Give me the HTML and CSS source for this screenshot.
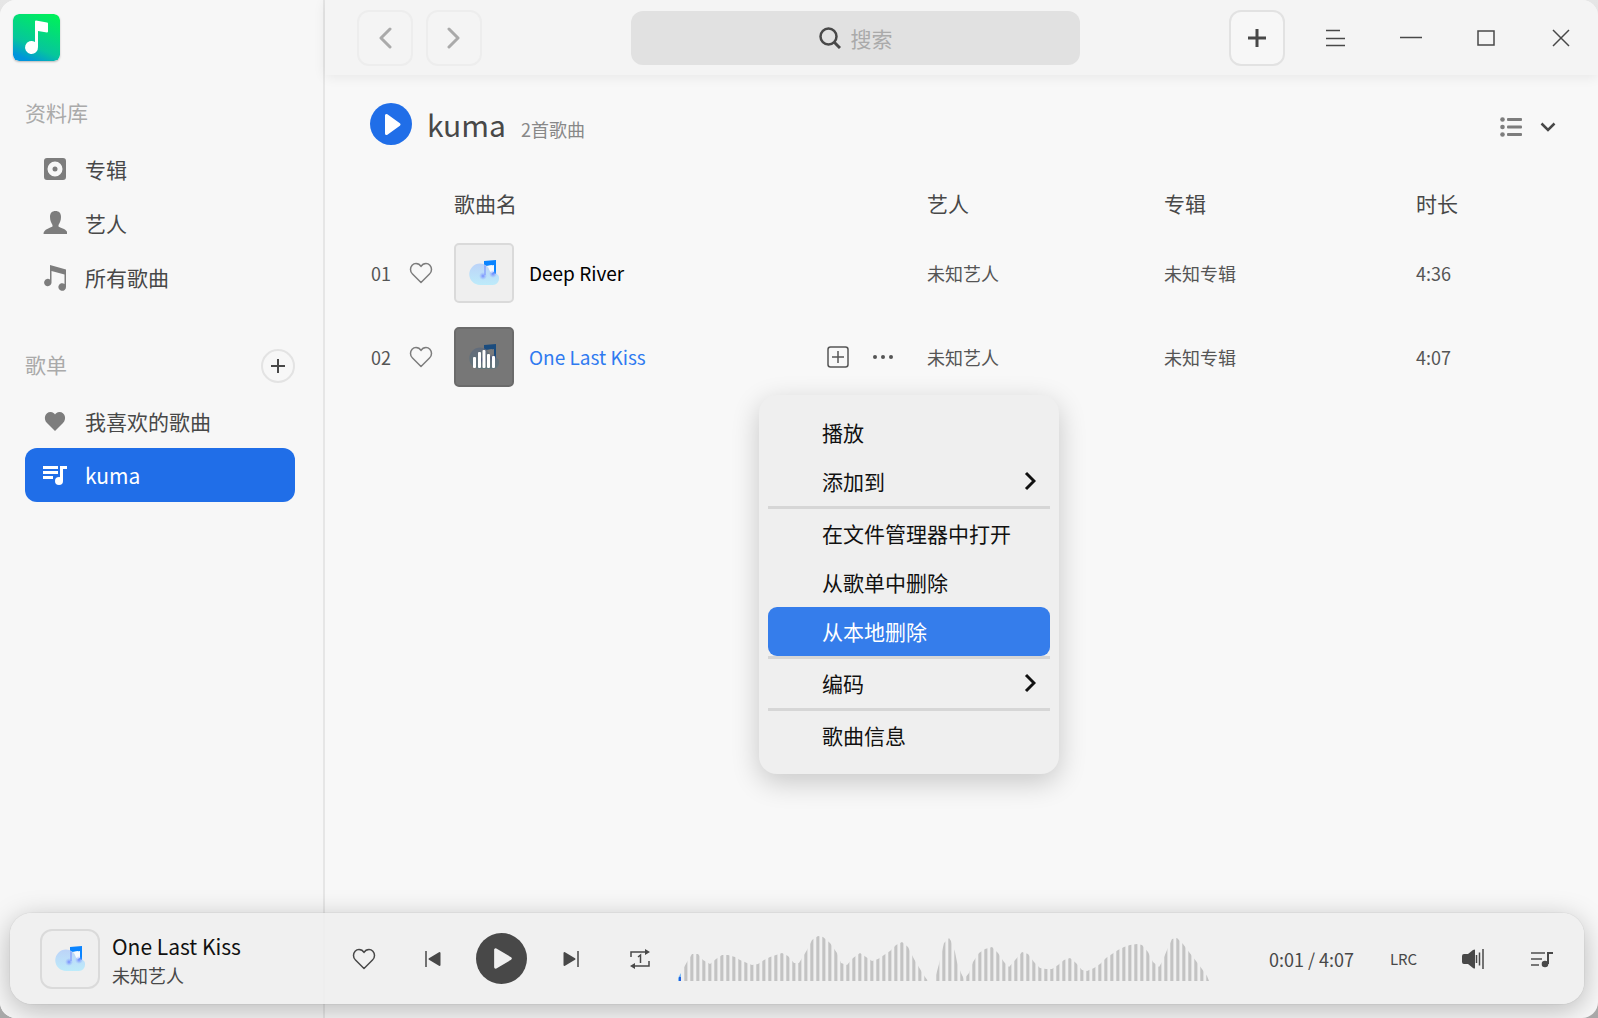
FILE: index.html
```html
<!DOCTYPE html>
<html lang="zh-CN">
<head>
<meta charset="utf-8">
<meta name="viewport" content="width=device-width, initial-scale=1">
<title>音乐</title>
<link rel="stylesheet" href="styles.css">
</head>
<body>
<svg class="defs" aria-hidden="true">
  <defs>
    <linearGradient id="cloud-fill" x1="0" y1="0" x2="0" y2="1">
      <stop offset="0" stop-color="#bcd3f8"/>
      <stop offset="1" stop-color="#bdebfa"/>
    </linearGradient>
    <radialGradient id="note-glow">
      <stop offset="0" stop-color="#6a82ff" stop-opacity=".9"/>
      <stop offset="1" stop-color="#8fa8ff" stop-opacity="0"/>
    </radialGradient>
    <linearGradient id="stem-glow" x1="0" y1="0" x2="0" y2="1">
      <stop offset="0" stop-color="#8aa4f8" stop-opacity=".8"/>
      <stop offset="1" stop-color="#7a90ff" stop-opacity=".5"/>
    </linearGradient>
  </defs>
  <symbol id="cloud-note" viewBox="0 0 30 26">
    <path d="M15 1l12-1v14h-4V5l-6 1v6h-2z" fill="#0a84ff"/>
    <path d="M19 6l6-1v7l-3 2z" fill="#f6faff"/>
    <path d="M11 3.500a10.500 10.500 0 0 1 10 8q1 2 3 2h2a5 5 0 0 1 4 5.500 6 6 0 0 1-6 6H11A10.700 10.700 0 0 1 11 3.500z" fill="url(#cloud-fill)"/>
    <path d="M15 5l2 1v9h-2z" fill="url(#stem-glow)"/>
    <circle cx="14" cy="16" r="4" fill="url(#note-glow)"/>
    <circle cx="24" cy="14" r="4" fill="url(#note-glow)"/>
  </symbol>
  <symbol id="heart" viewBox="0 0 24 22">
    <path d="M12 20.500L3.500 12A6 6 0 0 1 1.500 7.500C1.500 4 4 1.500 7 1.500c2.300 0 4 1.200 5 3 1-1.800 2.700-3 5-3 3 0 5.500 2.500 5.500 6A6 6 0 0 1 20.500 12z" fill="none" stroke="currentColor" stroke-width="1.500" stroke-linejoin="round"/>
  </symbol>
</svg>

<div class="window">
  <aside class="sidebar">
    <svg class="logo" viewBox="0 0 47 47" aria-hidden="true">
      <defs>
        <linearGradient id="logo-fill" x1=".8" y1="0" x2=".35" y2="1">
          <stop offset="0" stop-color="#00f05a"/>
          <stop offset=".7" stop-color="#06c69c"/>
          <stop offset="1" stop-color="#0094dc"/>
        </linearGradient>
      </defs>
      <rect width="47" height="47" rx="6" fill="url(#logo-fill)"/>
      <path d="M23 6.500l11 2q1 0 1 1v8q0 1-1 1l-9-1.500V33a6.500 6.500 0 1 1-3-5V7.500q0-1 1-1z" fill="#fff"/>
    </svg>

    <nav>
      <div class="section-head"><h2>资料库</h2></div>
      <ul>
        <li><a href="#albums">
          <svg viewBox="0 0 24 24" width="24" height="24"><path fill="currentColor" fill-rule="evenodd" d="M4 1h16a3 3 0 0 1 3 3v16a3 3 0 0 1-3 3H4a3 3 0 0 1-3-3V4a3 3 0 0 1 3-3zm8 3.500a7.500 7.500 0 1 0 0 15 7.500 7.500 0 0 0 0-15z"/><circle cx="12" cy="12" r="2.500" fill="currentColor"/></svg>
          专辑</a></li>
        <li><a href="#artists">
          <svg viewBox="0 0 24 24" width="24" height="24"><path fill="currentColor" d="M12.500 0c3.500 0 5.500 2 5.500 6 0 4-1.500 6-2.500 8v1.500c2 1.500 9 2.500 9 7.500H.500c0-5 7-6 9-7.500V14C8.500 12 7 10 7 6c0-4 2-6 5.500-6z"/></svg>
          艺人</a></li>
        <li><a href="#songs">
          <svg viewBox="0 0 24 27" width="24" height="27"><path fill="currentColor" d="M7 1l16 4.500V23a3.800 3.800 0 1 1-1.500-3v-9.500L8.500 7v11a3.700 3.700 0 1 1-1.500-2.500z"/></svg>
          所有歌曲</a></li>
      </ul>
      <div class="section-head playlists">
        <h2>歌单</h2>
        <button type="button" class="add-list" aria-label="新建歌单"><svg viewBox="0 0 16 16" width="16" height="16"><path d="M8 1v14M1 8h14" stroke="currentColor" stroke-width="2"/></svg></button>
      </div>
      <ul>
        <li><a href="#favorites">
          <svg viewBox="0 0 24 22" width="24" height="22"><path fill="currentColor" d="M12 21L4 13C0 9 2 2 7.500 2 10 2 11.500 3.500 12 4.500 12.500 3.500 14 2 16.500 2 22 2 24 9 20 13z"/></svg>
          我喜欢的歌曲</a></li>
        <li><a href="#kuma" class="current" aria-current="page">
          <svg viewBox="0 0 24 24" width="24" height="24"><path d="M0 4.500h15M0 9.500h15M0 14.500h10" stroke="currentColor" stroke-width="3"/><path d="M24 4.500h-5.500V18" fill="none" stroke="currentColor" stroke-width="3"/><circle cx="16" cy="18" r="4" fill="currentColor"/></svg>
          kuma</a></li>
      </ul>
    </nav>
  </aside>

  <main class="main">
    <header class="titlebar">
      <div class="history">
        <button type="button" class="box-button" aria-label="后退"><svg viewBox="0 0 14 22" width="14" height="22"><path d="M12 2L3 11l9 9" fill="none" stroke="currentColor" stroke-width="3" stroke-linecap="round" stroke-linejoin="round"/></svg></button>
        <button type="button" class="box-button" aria-label="前进"><svg viewBox="0 0 14 22" width="14" height="22"><path d="M2 2l9 9-9 9" fill="none" stroke="currentColor" stroke-width="3" stroke-linecap="round" stroke-linejoin="round"/></svg></button>
      </div>
      <label class="search">
        <svg viewBox="0 0 22 22" width="22" height="22" aria-hidden="true"><circle cx="9.500" cy="9.500" r="8" fill="none" stroke="currentColor" stroke-width="2.500"/><path d="M15 15l6 6" stroke="currentColor" stroke-width="3"/></svg>
        <input type="text" placeholder="搜索" aria-label="搜索">
      </label>
      <div class="controls">
        <button type="button" class="box-button add" aria-label="添加音乐"><svg viewBox="0 0 18 18" width="18" height="18"><path d="M9 0v18M0 9h18" stroke="currentColor" stroke-width="3"/></svg></button>
        <button type="button" aria-label="菜单"><svg viewBox="0 0 19 18" width="19" height="18"><path d="M0 1.500h14M0 9.500h19M0 16.500h19" stroke="currentColor" stroke-width="1.500"/></svg></button>
        <button type="button" aria-label="最小化"><svg viewBox="0 0 22 18" width="22" height="18"><path d="M0 8.500h22" stroke="currentColor" stroke-width="1.500"/></svg></button>
        <button type="button" aria-label="最大化"><svg viewBox="0 0 18 16" width="18" height="16"><rect x="1" y="1" width="16" height="14" fill="none" stroke="currentColor" stroke-width="1.500"/></svg></button>
        <button type="button" aria-label="关闭"><svg viewBox="0 0 18 18" width="18" height="18"><path d="M1 1l16 16M17 1L1 17" stroke="currentColor" stroke-width="1.500"/></svg></button>
      </div>
    </header>

    <section class="playlist">
      <div class="playlist-head">
        <button type="button" class="play-all" aria-label="播放全部"><svg viewBox="0 0 42 42" width="42" height="42"><path d="M16.500 12.500v18l12.500-9z" fill="#fff" stroke="#fff" stroke-width="3" stroke-linejoin="round"/></svg></button>
        <div class="playlist-title"><h1>kuma</h1><span>2首歌曲</span></div>
        <button type="button" class="view-switch" aria-label="视图与排序">
          <svg viewBox="0 0 22 20" width="22" height="20"><g fill="#7d7d7d"><circle cx="2.500" cy="2.500" r="2.300"/><circle cx="2.500" cy="10" r="2.300"/><circle cx="2.500" cy="17.500" r="2.300"/><rect x="7" y="1" width="15" height="3" rx="1"/><rect x="7" y="8.500" width="15" height="3" rx="1"/><rect x="7" y="16" width="15" height="3" rx="1"/></g></svg>
          <svg viewBox="0 0 16 10" width="16" height="10"><path d="M1.500 1.500L8 8l6.500-6.500" fill="none" stroke="currentColor" stroke-width="2.500"/></svg>
        </button>
      </div>

      <table class="songs">
        <colgroup><col class="c-index"><col class="c-like"><col><col class="c-actions"><col class="c-artist"><col class="c-album"><col class="c-time"></colgroup>
        <thead>
          <tr><td></td><td></td><th scope="col">歌曲名</th><td></td><th scope="col">艺人</th><th scope="col">专辑</th><th scope="col">时长</th></tr>
        </thead>
        <tbody>
          <tr>
            <td>01</td>
            <td><button type="button" class="like" aria-label="收藏"><svg width="24" height="22"><use href="#heart"/></svg></button></td>
            <td><div class="song"><span class="cover"><svg width="30" height="26"><use href="#cloud-note"/></svg></span>Deep River</div></td>
            <td></td><td>未知艺人</td><td>未知专辑</td><td>4:36</td>
          </tr>
          <tr class="playing">
            <td>02</td>
            <td><button type="button" class="like" aria-label="收藏"><svg width="24" height="22"><use href="#heart"/></svg></button></td>
            <td><div class="song"><span class="cover"><svg width="30" height="26"><use href="#cloud-note"/></svg><svg class="bars" viewBox="0 0 22 22" width="22" height="22" aria-hidden="true"><g fill="#fff"><rect x="0" y="11" width="3" height="11" rx="1"/><rect x="5" y="6" width="3" height="16" rx="1"/><rect x="9.500" y="4" width="3" height="18" rx="1"/><rect x="14" y="8" width="3" height="14" rx="1"/><rect x="19" y="10" width="3" height="12" rx="1"/></g></svg></span>One Last Kiss</div></td>
            <td><div class="actions">
              <button type="button" aria-label="添加到歌单"><svg viewBox="0 0 22 22" width="22" height="22"><rect x="1" y="1" width="20" height="20" rx="2.500" fill="none" stroke="currentColor" stroke-width="1.500"/><path d="M11 5v12M5 11h12" stroke="currentColor" stroke-width="1.500"/></svg></button>
              <button type="button" aria-label="更多"><svg viewBox="0 0 20 4" width="20" height="4"><g fill="currentColor"><circle cx="2" cy="2" r="2"/><circle cx="10" cy="2" r="2"/><circle cx="18" cy="2" r="2"/></g></svg></button>
            </div></td>
            <td>未知艺人</td><td>未知专辑</td><td>4:07</td>
          </tr>
        </tbody>
      </table>
    </section>

    <div class="menu" role="menu">
      <button type="button" role="menuitem">播放</button>
      <button type="button" role="menuitem" aria-haspopup="true">添加到<svg viewBox="0 0 12 20" width="12" height="20"><path d="M2 2l8 8-8 8" fill="none" stroke="currentColor" stroke-width="3"/></svg></button>
      <hr>
      <button type="button" role="menuitem">在文件管理器中打开</button>
      <button type="button" role="menuitem">从歌单中删除</button>
      <button type="button" role="menuitem" class="active">从本地删除</button>
      <hr>
      <button type="button" role="menuitem" aria-haspopup="true">编码<svg viewBox="0 0 12 20" width="12" height="20"><path d="M2 2l8 8-8 8" fill="none" stroke="currentColor" stroke-width="3"/></svg></button>
      <hr>
      <button type="button" role="menuitem">歌曲信息</button>
    </div>
  </main>

  <footer class="player">
    <div class="now">
      <span class="cover"><svg width="30" height="26"><use href="#cloud-note"/></svg></span>
      <div class="now-text"><strong>One Last Kiss</strong><span>未知艺人</span></div>
    </div>
    <button type="button" aria-label="收藏"><svg width="24" height="22"><use href="#heart"/></svg></button>
    <button type="button" aria-label="上一首"><svg viewBox="0 0 16 16" width="16" height="16"><path d="M1 0v16" stroke="currentColor" stroke-width="1.500"/><path d="M14.500 2v12L4.500 8z" fill="currentColor" stroke="currentColor" stroke-width="2" stroke-linejoin="round"/></svg></button>
    <button type="button" aria-label="播放"><svg viewBox="0 0 52 52" width="51" height="51"><circle cx="26" cy="26" r="26" fill="#484848"/><path d="M20 17v18l15-9z" fill="#f0f0f0" stroke="#f0f0f0" stroke-width="3" stroke-linejoin="round"/></svg></button>
    <button type="button" aria-label="下一首"><svg viewBox="0 0 16 16" width="16" height="16"><path d="M15 0v16" stroke="currentColor" stroke-width="1.500"/><path d="M1.500 2v12l10-6z" fill="currentColor" stroke="currentColor" stroke-width="2" stroke-linejoin="round"/></svg></button>
    <button type="button" aria-label="单曲循环"><svg viewBox="0 0 22 20" width="22" height="20"><path d="M2 8V3h15M20 12v5H5" fill="none" stroke="currentColor" stroke-width="1.500"/><path d="M16 0l5 3-5 3zM6 14l-5 3 5 3z" fill="currentColor"/><path d="M9 8l2.500-2v8" fill="none" stroke="currentColor" stroke-width="1.500"/></svg></button>
    <div class="wave">
      <svg width="531" height="45" aria-hidden="true">
        <defs>
          <pattern id="stripes" width="6" height="45" patternUnits="userSpaceOnUse"><rect width="1" height="45" fill="#d0d0d0"/><rect x="1" width="2" height="45" fill="#c3c3c3"/><rect x="3" width="1" height="45" fill="#dedede"/></pattern>
        </defs>
        <path fill="url(#stripes)" d="M5 45V33L9 26 14 18H20L25 24 32 28 38 23 44 19H50L57 21 62 24 69 27 74 29 80 28 86 24 92 21 98 19 104 17 110 20 116 27H121L129 14 134 4 140 0 145 1 152 7 159 17 163 27 169 29 175 22 182 17 188 21 194 25 200 23 206 19 212 15 218 9 224 6 230 11 236 23 242 33 247 41 250 45H257L258 39 261 28 266 7 271 2 273 5 277 16 279 26 283 37 286 43 291 37 295 26 301 17 307 13 314 11 320 17 326 26 331 31 338 23 344 16 350 18 356 26 362 32 368 33H374L380 29 386 24 392 22 398 27 404 34 409 35 416 32 422 28 428 22 434 18 440 14 446 11 452 9 459 8 464 9 470 16 475 26 481 31 484 26 489 14 494 3 499 2 505 8 511 16 518 25 524 33 529 40 531 45z"/>
        <path d="M0 45V42L3 37v8z" fill="#79b9f2"/><path d="M1 45v-4h2v4z" fill="#1f5fe0"/>
      </svg>
    </div>
    <div class="time">0:01 / 4:07</div>
    <button type="button" class="lrc">LRC</button>
    <button type="button" aria-label="音量"><svg viewBox="0 0 22 20" width="22" height="20"><path fill="currentColor" d="M2 5h4l5-4q2-1 2 0v18q0 1-2 0l-5-4H2q-2 0-2-2V7q0-2 2-2z"/><path d="M14.500 6v8M17.500 3.500v13M21 0v20" stroke="currentColor" stroke-width="1.500"/></svg></button>
    <button type="button" aria-label="播放队列"><svg viewBox="0 0 22 18" width="22" height="18"><path d="M0 3h14M0 9h11M0 15h8" stroke="#777" stroke-width="2"/><path d="M22 3h-5v11" fill="none" stroke="currentColor" stroke-width="2"/><circle cx="14" cy="14" r="3.300" fill="currentColor"/></svg></button>
  </footer>
</div>
</body>
</html>
```

FILE: styles.css
```css
* { box-sizing: border-box; }

body {
  margin: 0;
  background: linear-gradient(#e6e6e6, #a8a8a8);
  color: #484848;
  font: 21px/32px "Noto Sans CJK SC", sans-serif;
}

button, input {
  padding: 0;
  border: 0;
  background: none;
  color: inherit;
  font: inherit;
}

button {
  display: flex;
  align-items: center;
  justify-content: center;
}

h1, h2 { margin: 0; font-weight: 400; }
ul { margin: 0; padding: 0; list-style: none; }
svg { display: block; flex: none; }
.defs { position: absolute; width: 0; height: 0; }

.window {
  position: relative;
  display: flex;
  min-height: 100vh;
  border-radius: 16px;
  background: #f8f8f8;
  overflow: hidden;
}

/* Sidebar */
.sidebar {
  flex: none;
  width: 325px;
  padding: 14px 28px 0 25px;
  border-right: 2px solid #e6e6e6;
  background: #f7f7f7;
}

.logo {
  width: 47px;
  height: 47px;
  margin: 0 0 25px -12px;
  border-radius: 6px;
  box-shadow: 0 1px 2px rgba(0, 0, 0, .25);
}

.section-head {
  display: flex;
  align-items: center;
  justify-content: space-between;
  height: 56px;
}

.section-head h2 { padding-bottom: 4px; color: #aaa; font-size: 21px; }
.section-head.playlists { margin-top: 34px; }

.add-list {
  width: 34px;
  height: 34px;
  border: 2px solid #e3e3e3;
  border-radius: 50%;
}

.sidebar li a {
  display: flex;
  align-items: center;
  gap: 18px;
  height: 54px;
  padding-left: 18px;
  border-radius: 12px;
  color: #484848;
  text-decoration: none;
}

.sidebar li svg { color: #7d7d7d; }
.sidebar li a.current { background: #206ee8; color: #fff; }
.sidebar li a.current svg { color: #fff; }

/* Title bar */
.main { position: relative; flex: 1; min-width: 0; }

.titlebar {
  display: flex;
  align-items: center;
  justify-content: space-between;
  height: 75px;
  padding-left: 32px;
  background: #f4f4f4;
  box-shadow: 0 2px 12px rgba(0, 0, 0, .07);
}

.history { display: flex; gap: 13px; color: #aaa; }

.box-button {
  width: 56px;
  height: 56px;
  border: 2px solid #ededed;
  border-radius: 12px;
}

.search {
  display: flex;
  align-items: center;
  justify-content: center;
  gap: 10px;
  width: 449px;
  height: 54px;
  border-radius: 12px;
  background: #e1e1e1;
}

.search input { width: 42px; outline: 0; }
.search input::placeholder { color: #aaa; opacity: 1; }

.controls { display: flex; }
.controls button { width: 75px; height: 56px; }
.controls .add {
  width: 56px;
  margin-right: 13px;
  border-color: #e2e2e2;
  background: #f7f7f7;
}

/* Playlist */
.playlist { padding: 28px 38px 120px 45px; }
.playlist-head { display: flex; align-items: center; gap: 15px; height: 42px; }
.play-all { border-radius: 50%; background: #206ee8; }

.playlist-title {
  display: flex;
  flex: 1;
  align-items: baseline;
  gap: 15px;
  padding-top: 5px;
  line-height: 42px;
}

.playlist-title h1 { font-size: 30px; }
.playlist-title span { color: #888; font-size: 18px; }
.view-switch { gap: 18px; margin-right: 4px; padding-top: 5px; }

.songs {
  width: 100%;
  margin-top: 34px;
  border-spacing: 0;
  table-layout: fixed;
  font-size: 18px;
}

.c-index { width: 39px; }
.c-like { width: 45px; }
.c-actions { width: 100px; }
.c-artist { width: 237px; }
.c-album { width: 252px; }
.c-time { width: 144px; }

.songs th, .songs td { padding: 0; text-align: left; white-space: nowrap; }
.songs th { height: 52px; padding-bottom: 4px; font-size: 21px; font-weight: 400; }
.songs tbody td { height: 84px; color: #555; }
.songs tbody td:first-child { padding-left: 1px; }
.like { color: #7d7d7d; }

.song {
  display: flex;
  align-items: center;
  gap: 15px;
  color: #000;
  font-size: 19px;
}

.playing .song { color: #2f7af0; }

.cover {
  display: flex;
  flex: none;
  align-items: center;
  justify-content: center;
  width: 60px;
  height: 60px;
  border: 2px solid #dadada;
  border-radius: 5px;
  background: #efefef;
}

.playing .cover {
  position: relative;
  border-color: #6b6b6b;
  background: #777;
}

.playing .cover svg:first-child { filter: brightness(.5); opacity: .8; }
.bars { position: absolute; }

.actions { display: flex; align-items: center; gap: 24px; color: #555; }

/* Context menu */
.menu {
  position: absolute;
  top: 395px;
  left: 434px;
  width: 300px;
  padding: 13px 9px 14px;
  border-radius: 18px;
  background: #efefef;
  box-shadow: 0 8px 28px rgba(0, 0, 0, .2);
}

.menu button {
  justify-content: space-between;
  width: 100%;
  height: 49px;
  padding: 0 14px 2px 54px;
  border-radius: 9px;
  color: #111;
}

.menu .active { background: #357deb; color: #fff; }
.menu hr { height: 3px; margin: 0; border: 0; background: #d6d6d6; }

/* Player bar */
.player {
  position: absolute;
  right: 14px;
  bottom: 14px;
  left: 10px;
  display: flex;
  align-items: center;
  height: 91px;
  padding: 0 8px 0 30px;
  border-radius: 22px;
  background: rgba(239, 239, 239, .92);
  box-shadow: 0 0 0 1px rgba(0, 0, 0, .03), 0 6px 28px rgba(0, 0, 0, .26);
}

.player button { flex: none; width: 69px; height: 60px; }
.now { display: flex; flex: none; gap: 12px; align-items: center; width: 289px; }
.now .cover { border-radius: 12px; }
.now-text { display: flex; flex-direction: column; }
.now-text strong { color: #111; font-weight: 400; }
.now-text span { font-size: 18px; line-height: 26px; }
.wave { flex: 1; min-width: 0; padding-left: 4px; overflow: hidden; }
.time { flex: none; width: 100px; font-size: 18px; }
.player .lrc { font-size: 15px; }
```
